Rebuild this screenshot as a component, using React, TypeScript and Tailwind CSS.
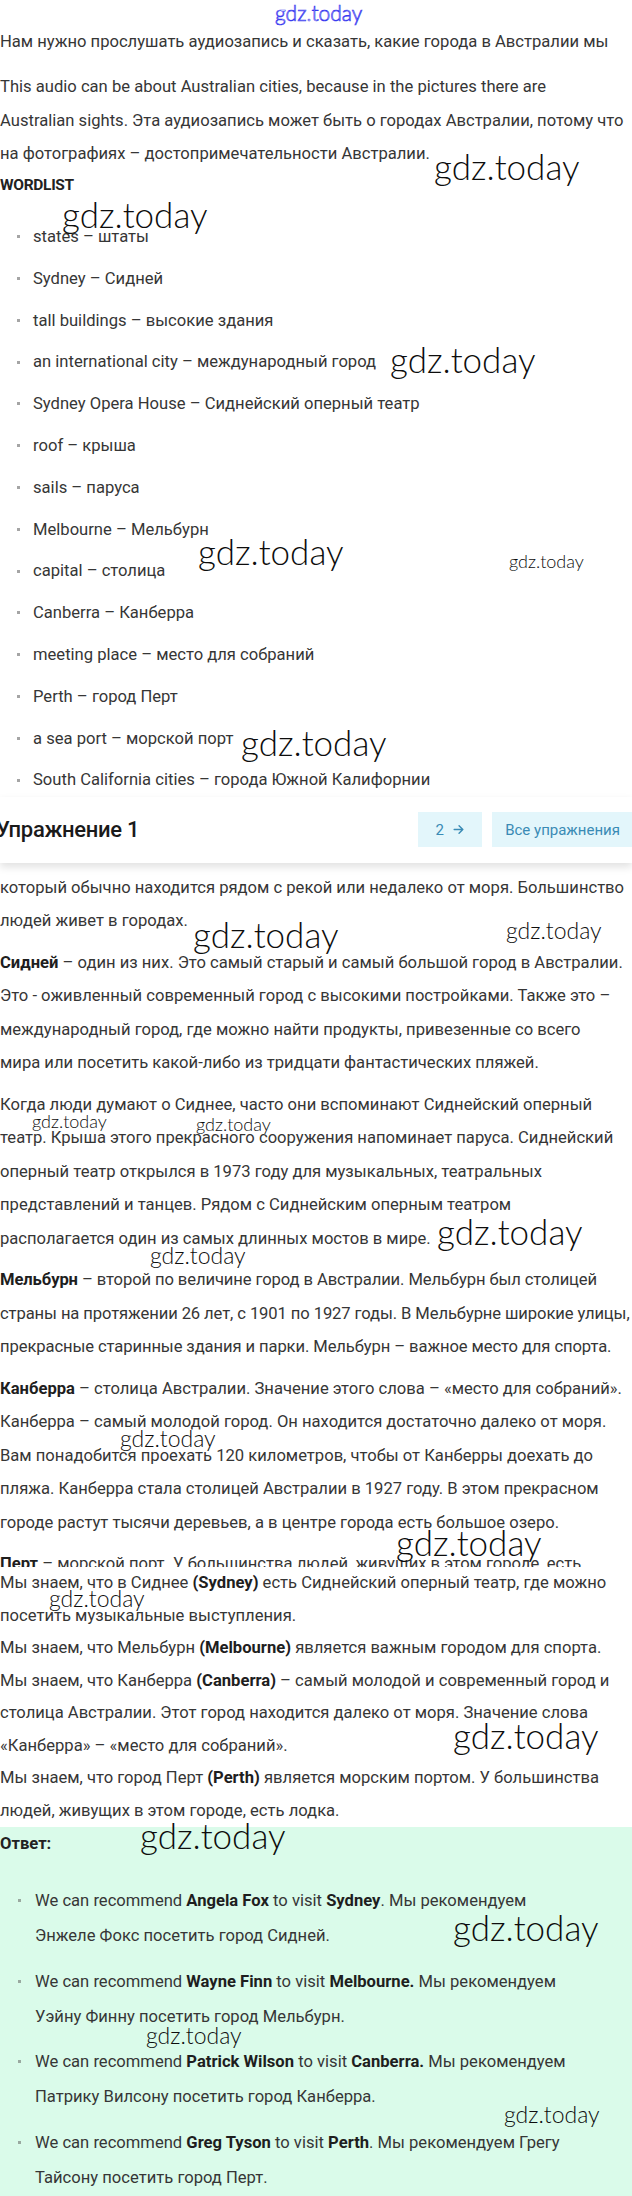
import React from "react";

function Rich({ text }: { text: string }) {
  const parts = text.split("**");
  return (
    <>
      {parts.map((p, i) =>
        i % 2 === 1 ? (
          <b key={i} className="font-bold text-[#1e1e1e]">
            {p}
          </b>
        ) : (
          <span key={i}>{p}</span>
        )
      )}
    </>
  );
}

function Para({ lines, className = "" }: { lines: string[]; className?: string }) {
  return (
    <div className={className}>
      {lines.map((l, i) => (
        <div key={i} className="whitespace-nowrap">
          <Rich text={l} />
        </div>
      ))}
    </div>
  );
}

const wordlist = [
  "states – штаты",
  "Sydney – Сидней",
  "tall buildings – высокие здания",
  "an international city – международный город",
  "Sydney Opera House – Сиднейский оперный театр",
  "roof – крыша",
  "sails – паруса",
  "Melbourne – Мельбурн",
  "capital – столица",
  "Canberra – Канберра",
  "meeting place – место для собраний",
  "Perth – город Перт",
  "a sea port – морской порт",
  "South California cities – города Южной Калифорнии",
];

const answers: string[][] = [
  ["We can recommend **Angela Fox** to visit **Sydney**. Мы рекомендуем", "Энжеле Фокс посетить город Сидней."],
  ["We can recommend **Wayne Finn** to visit **Melbourne.** Мы рекомендуем", "Уэйну Финну посетить город Мельбурн."],
  ["We can recommend **Patrick Wilson** to visit **Canberra.** Мы рекомендуем", "Патрику Вилсону посетить город Канберра."],
  ["We can recommend **Greg Tyson** to visit **Perth**. Мы рекомендуем Грегу", "Тайсону посетить город Перт."],
];

type WM = { x: number; y: number; s: "big" | "mid" | "small" };
const marks: WM[] = [
  { x: 434, y: 168, s: "big" },
  { x: 62, y: 216, s: "big" },
  { x: 390, y: 361, s: "big" },
  { x: 198, y: 553, s: "big" },
  { x: 509, y: 562, s: "small" },
  { x: 241, y: 744, s: "big" },
  { x: 193, y: 936, s: "big" },
  { x: 506, y: 932, s: "mid" },
  { x: 32, y: 1122, s: "small" },
  { x: 196, y: 1125, s: "small" },
  { x: 437, y: 1233, s: "big" },
  { x: 150, y: 1257, s: "mid" },
  { x: 120, y: 1440, s: "mid" },
  { x: 396, y: 1544, s: "big" },
  { x: 49, y: 1600, s: "mid" },
  { x: 453, y: 1737, s: "big" },
  { x: 140, y: 1837, s: "big" },
  { x: 453, y: 1929, s: "big" },
  { x: 146, y: 2037, s: "mid" },
  { x: 504, y: 2116, s: "mid" },
];

function Watermark({ m }: { m: WM }) {
  const cls =
    m.s === "big"
      ? "text-[35px] leading-[35px]"
      : m.s === "mid"
      ? "text-[23px] leading-[23px]"
      : "text-[18px] leading-[18px]";
  const half = m.s === "big" ? 19 : m.s === "mid" ? 13 : 10;
  return (
    <div
      className={`absolute pointer-events-none font-light text-[#0d0d0d] whitespace-nowrap ${cls}`}
      style={{ left: m.x, top: m.y - half, fontFamily: "Lato, 'DejaVu Sans', sans-serif" }}
    >
      gdz.today
    </div>
  );
}

export default function App() {
  return (
    <div
      className="relative w-[632px] overflow-hidden bg-white text-[16.6px] text-[#363636]"
      style={{ fontFamily: "Roboto, 'Liberation Sans', sans-serif" }}
    >
      {/* Section A */}
      <div className="pt-[25px] leading-[33.5px]">
        <div
          className="absolute left-[275px] top-[1px] text-[21px] leading-[24px] font-light text-transparent [-webkit-text-stroke:0.7px_#3a3af0]"
          style={{ fontFamily: "Lato, sans-serif" }}
        >
          gdz.today
        </div>
        <Para lines={["Нам нужно прослушать аудиозапись и сказать, какие города в Австралии мы"]} />
        <Para
          className="mt-[11.5px]"
          lines={[
            "This audio can be about Australian cities, because in the pictures there are",
            "Australian sights. Эта аудиозапись может быть о городах Австралии, потому что",
            "на фотографиях – достопримечательности Австралии.",
          ]}
        />
        <div className="h-[29px] leading-[29px] font-bold uppercase text-[15.5px] text-[#222] tracking-[-0.3px]">
          Wordlist
        </div>
        <ul className="mt-[20.5px]">
          {wordlist.map((w, i) => (
            <li key={i} className="flex items-center h-[33.5px] mb-[8.3px] last:mb-0">
              <span className="ml-[17px] w-[3px] h-[3px] bg-[#a5a5a5]" />
              <span className="ml-[13px] whitespace-nowrap">{w}</span>
            </li>
          ))}
        </ul>
      </div>

      {/* Header bar */}
      <div className="relative z-10 flex items-center justify-between h-[66px] bg-white shadow-[0_4px_8px_rgba(0,0,0,0.12)]">
        <div className="-ml-[4px] text-[22px] font-medium text-[#1a1a1a] tracking-[-0.3px]">
          Упражнение 1
        </div>
        <div className="flex items-center gap-[10px] -mr-[20px]">
          <div className="flex items-center justify-center gap-[8px] w-[64px] h-[35px] bg-[#e3f6fb] text-[#3a8bb5] text-[15px]">
            <span>2</span>
            <svg width="13" height="13" viewBox="0 0 24 24" fill="none" stroke="currentColor" strokeWidth="2.6" strokeLinecap="round" strokeLinejoin="round">
              <path d="M4 12h16M13 5l7 7-7 7" />
            </svg>
          </div>
          <div className="flex items-center h-[35px] pl-[13px] pr-[32px] bg-[#e3f6fb] text-[#3a8bb5] text-[15px] whitespace-nowrap">
            Все упражнения
          </div>
        </div>
      </div>

      {/* Section B */}
      <div className="leading-[33.5px]">
        <div className="h-[8px] overflow-hidden">
          <div className="-mt-[25.5px] whitespace-nowrap">
            Это самый крупный город, другими словами – мегаполис, городу присущ
          </div>
        </div>
        <Para
          className="mb-[8px]"
          lines={[
            "который обычно находится рядом с рекой или недалеко от моря. Большинство",
            "людей живет в городах.",
          ]}
        />
        <Para
          className="mb-[8px]"
          lines={[
            "**Сидней** – один из них. Это самый старый и самый большой город в Австралии.",
            "Это - оживленный современный город с высокими постройками. Также это –",
            "международный город, где можно найти продукты, привезенные со всего",
            "мира или посетить какой-либо из тридцати фантастических пляжей.",
          ]}
        />
        <Para
          className="mb-[8px]"
          lines={[
            "Когда люди думают о Сиднее, часто они вспоминают Сиднейский оперный",
            "театр. Крыша этого прекрасного сооружения напоминает паруса. Сиднейский",
            "оперный театр открылся в 1973 году для музыкальных, театральных",
            "представлений и танцев. Рядом с Сиднейским оперным театром",
            "располагается один из самых длинных мостов в мире.",
          ]}
        />
        <Para
          className="mb-[8px] tracking-[-0.1px]"
          lines={[
            "**Мельбурн** – второй по величине город в Австралии. Мельбурн был столицей",
            "страны на протяжении 26 лет, с 1901 по 1927 годы. В Мельбурне широкие улицы,",
            "прекрасные старинные здания и парки. Мельбурн – важное место для спорта.",
          ]}
        />
        <Para
          className="mb-[8px]"
          lines={[
            "**Канберра** – столица Австралии. Значение этого слова – «место для собраний».",
            "Канберра – самый молодой город. Он находится достаточно далеко от моря.",
            "Вам понадобится проехать 120 километров, чтобы от Канберры доехать до",
            "пляжа. Канберра стала столицей Австралии в 1927 году. В этом прекрасном",
            "городе растут тысячи деревьев, а в центре города есть большое озеро.",
          ]}
        />
        <div className="h-[20px] overflow-hidden">
          <Para lines={["**Перт** – морской порт. У большинства людей, живущих в этом городе, есть"]} />
        </div>
      </div>

      {/* Section C */}
      <div className="leading-[32.5px]">
        <Para
          lines={[
            "Мы знаем, что в Сиднее **(Sydney)** есть Сиднейский оперный театр, где можно",
            "посетить музыкальные выступления.",
          ]}
        />
        <Para lines={["Мы знаем, что Мельбурн **(Melbourne)** является важным городом для спорта."]} />
        <Para
          lines={[
            "Мы знаем, что Канберра **(Canberra)** – самый молодой и современный город и",
            "столица Австралии. Этот город находится далеко от моря. Значение слова",
            "«Канберра» – «место для собраний».",
          ]}
        />
        <Para
          lines={[
            "Мы знаем, что город Перт **(Perth)** является морским портом. У большинства",
            "людей, живущих в этом городе, есть лодка.",
          ]}
        />
      </div>

      {/* Section D: answer */}
      <div className="bg-[#dafbea] pb-[1px]">
        <div className="h-[34px] leading-[34px] font-bold text-[#222]">Ответ:</div>
        <ul className="mt-[21.5px]">
          {answers.map((a, i) => (
            <li key={i} className="flex mb-[10.7px] leading-[35px]">
              <span className="mt-[16px] ml-[18px] w-[3px] h-[3px] bg-[#9aa9a0] shrink-0" />
              <div className="ml-[14px]">
                {a.map((l, j) => (
                  <div key={j} className="whitespace-nowrap">
                    <Rich text={l} />
                  </div>
                ))}
              </div>
            </li>
          ))}
        </ul>
      </div>

      {marks.map((m, i) => (
        <Watermark key={i} m={m} />
      ))}
    </div>
  );
}
